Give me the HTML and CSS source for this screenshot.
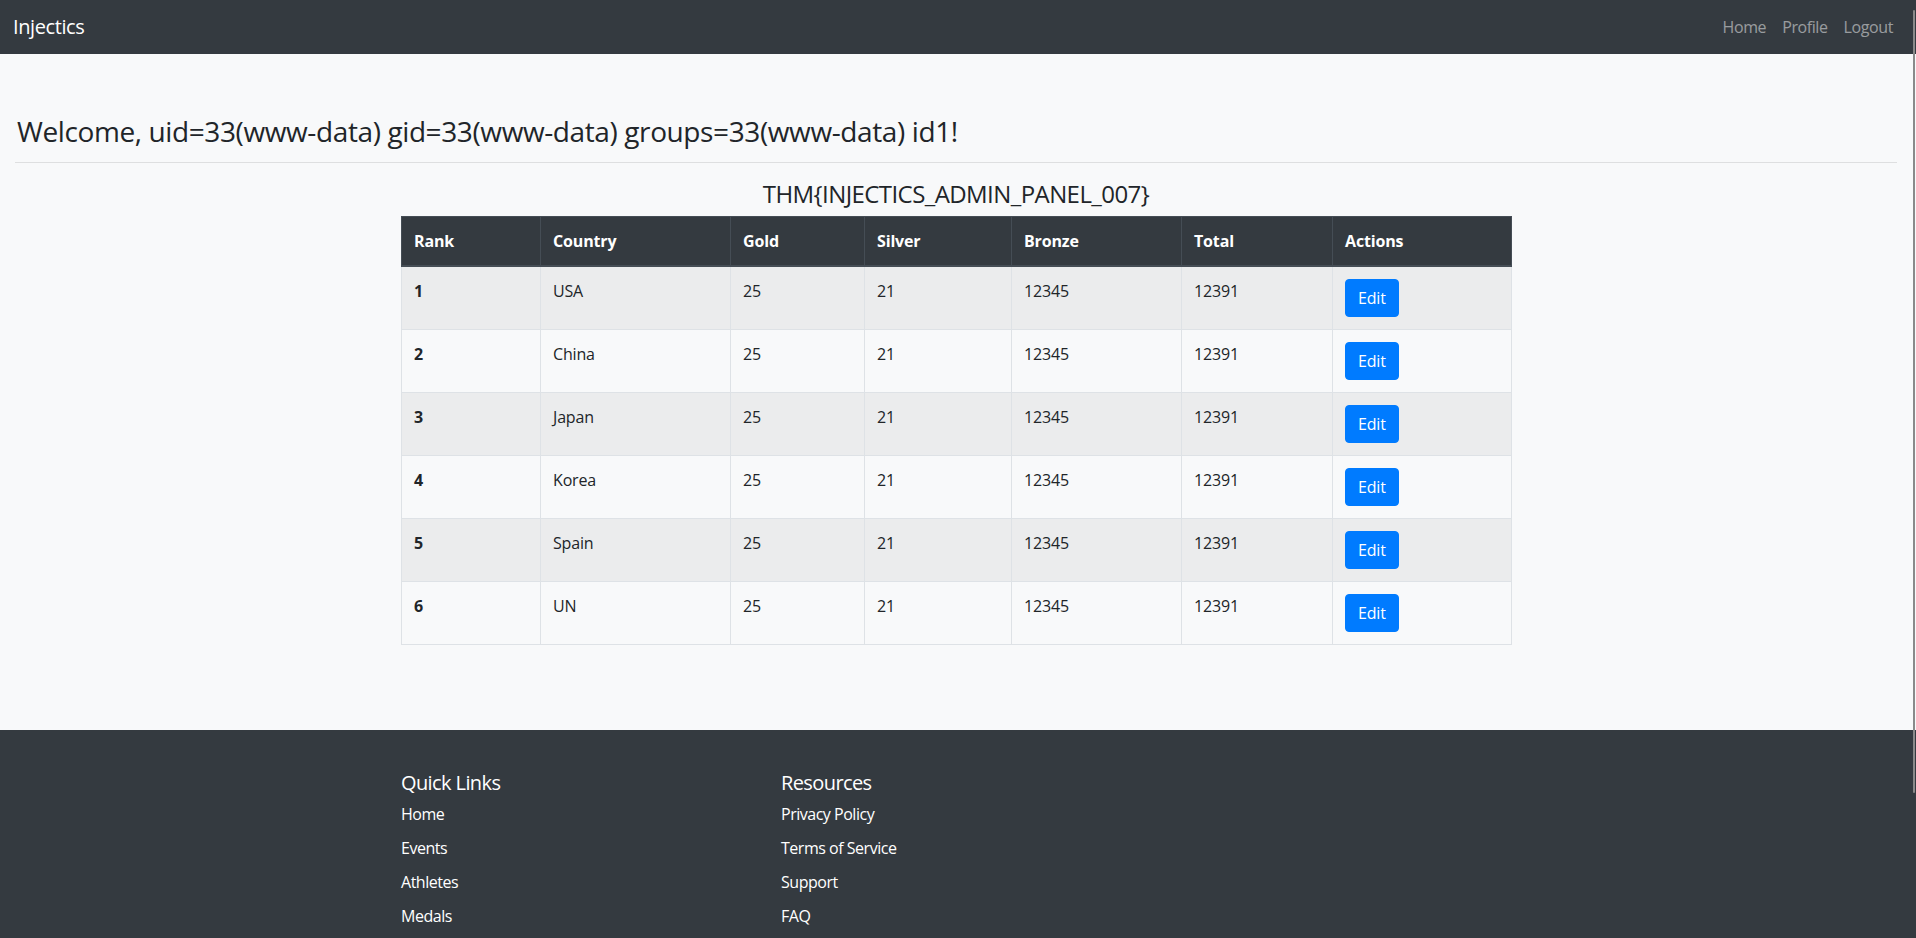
FILE: index.html
```html
<!DOCTYPE html>
<html lang="en">
<head>
<meta charset="utf-8">
<title>Injectics - Admin Panel</title>
<link rel="stylesheet" href="styles.css">
</head>
<body>
<nav class="navbar">
  <a class="brand" href="#">Injectics</a>
  <ul class="nav-links">
    <li><a href="#">Home</a></li>
    <li><a href="#">Profile</a></li>
    <li><a href="#">Logout</a></li>
  </ul>
</nav>

<main class="main">
  <div class="fluid">
    <h3 class="welcome">Welcome, uid=33(www-data) gid=33(www-data) groups=33(www-data) id1!</h3>
    <hr class="rule">
    <div class="container">
      <h4 class="flag">THM{INJECTICS_ADMIN_PANEL_007}</h4>
      <table class="medals">
        <colgroup>
          <col class="c-rank"><col class="c-country"><col class="c-gold"><col class="c-silver"><col class="c-bronze"><col class="c-total"><col class="c-actions">
        </colgroup>
        <thead>
          <tr><th>Rank</th><th>Country</th><th>Gold</th><th>Silver</th><th>Bronze</th><th>Total</th><th>Actions</th></tr>
        </thead>
        <tbody>
          <tr><th>1</th><td>USA</td><td>25</td><td>21</td><td>12345</td><td>12391</td><td><a class="btn" href="#">Edit</a></td></tr>
          <tr><th>2</th><td>China</td><td>25</td><td>21</td><td>12345</td><td>12391</td><td><a class="btn" href="#">Edit</a></td></tr>
          <tr><th>3</th><td>Japan</td><td>25</td><td>21</td><td>12345</td><td>12391</td><td><a class="btn" href="#">Edit</a></td></tr>
          <tr><th>4</th><td>Korea</td><td>25</td><td>21</td><td>12345</td><td>12391</td><td><a class="btn" href="#">Edit</a></td></tr>
          <tr><th>5</th><td>Spain</td><td>25</td><td>21</td><td>12345</td><td>12391</td><td><a class="btn" href="#">Edit</a></td></tr>
          <tr><th>6</th><td>UN</td><td>25</td><td>21</td><td>12345</td><td>12391</td><td><a class="btn" href="#">Edit</a></td></tr>
        </tbody>
      </table>
    </div>
  </div>
</main>

<footer class="footer">
  <div class="container footer-grid">
    <div class="footer-col">
      <h5>Quick Links</h5>
      <ul class="footer-list">
        <li><a href="#">Home</a></li>
        <li><a href="#">Events</a></li>
        <li><a href="#">Athletes</a></li>
        <li><a href="#">Medals</a></li>
      </ul>
    </div>
    <div class="footer-col">
      <h5>Resources</h5>
      <ul class="footer-list">
        <li><a href="#">Privacy Policy</a></li>
        <li><a href="#">Terms of Service</a></li>
        <li><a href="#">Support</a></li>
        <li><a href="#">FAQ</a></li>
      </ul>
    </div>
    <div class="footer-col"></div>
  </div>
</footer>

<div class="scroll-thumb"></div>
</body>
</html>
```

FILE: styles.css
```css
* { box-sizing: border-box; }

html, body {
  margin: 0;
  padding: 0;
}

body {
  height: 100vh;
  overflow: hidden;
  background: #f8f9fa;
  color: #212529;
  font-family: "Open Sans", "Noto Sans", sans-serif;
  font-size: 16px;
  line-height: 1.5;
  letter-spacing: -0.01em;
}

a { text-decoration: none; }

/* Navbar */
.navbar {
  height: 54px;
  background: #343a40;
  display: flex;
  align-items: center;
  justify-content: space-between;
  padding: 0 15px 0 13px;
}

.brand {
  color: #fff;
  font-size: 20px;
  line-height: 30px;
  letter-spacing: -0.02em;
}

.nav-links {
  list-style: none;
  margin: 0;
  padding: 0;
  display: flex;
}

.nav-links a {
  display: block;
  padding: 8px 8px;
  color: rgba(255, 255, 255, 0.5);
  font-size: 16px;
  letter-spacing: -0.025em;
}

/* Main */
.main {
  margin-right: 4px;
  padding-top: 61px;
  padding-bottom: 85px;
}

.fluid {
  padding: 0 15px;
}

.welcome {
  margin: 0;
  padding-left: 2px;
  font-size: 28px;
  font-weight: 400;
  line-height: 1.2;
  letter-spacing: -0.014em;
}

.rule {
  margin: 13px 0 17px;
  border: 0;
  border-top: 1px solid rgba(0, 0, 0, 0.1);
}

.container {
  width: 1140px;
  margin: 0 auto;
  padding: 0 15px;
}

.flag {
  margin: 0 0 8px;
  text-align: center;
  font-size: 24px;
  font-weight: 400;
  line-height: 1.2;
  letter-spacing: -0.024em;
}

/* Table */
.medals {
  width: 100%;
  table-layout: fixed;
  border-collapse: collapse;
  border: 1px solid #dee2e6;
}

.c-rank { width: 139px; }
.c-country { width: 190px; }
.c-gold { width: 134px; }
.c-silver { width: 147px; }
.c-bronze { width: 170px; }
.c-total { width: 151px; }
.c-actions { width: 179px; }

.medals th,
.medals td {
  padding: 12px;
  text-align: left;
  vertical-align: top;
  border: 1px solid #dee2e6;
  line-height: 24px;
}

.medals thead th {
  background: #343a40;
  color: #fff;
  border-color: #454d55;
  border-bottom-width: 2px;
  font-weight: 700;
}

.medals tbody th {
  font-weight: 700;
}

.medals tbody tr:nth-child(odd) {
  background: rgba(0, 0, 0, 0.05);
}

.btn {
  display: inline-block;
  padding: 6px 12px;
  border: 1px solid #007bff;
  border-radius: 4px;
  background: #007bff;
  color: #fff;
  font-size: 16px;
  line-height: 24px;
}

/* Footer */
.footer {
  background: #343a40;
  color: #fff;
  padding: 41px 4px 80px 0;
}

.footer-grid {
  display: grid;
  grid-template-columns: repeat(3, 1fr);
  padding: 0;
}

.footer-col {
  padding: 0 15px;
}

.footer-col h5 {
  margin: 0 0 7px;
  font-size: 20px;
  font-weight: 400;
  line-height: 1.2;
  letter-spacing: -0.03em;
}

.footer-list {
  list-style: none;
  margin: 0;
  padding: 0;
}

.footer-list li {
  line-height: 24px;
  margin-bottom: 10px;
}

.footer-list a {
  color: #fff;
  letter-spacing: -0.03em;
}

/* overlay scrollbar thumb */
.scroll-thumb {
  position: fixed;
  top: 10px;
  right: 1px;
  width: 2px;
  height: 783px;
  background: #8a8a8a;
  border-radius: 1px;
}
```
